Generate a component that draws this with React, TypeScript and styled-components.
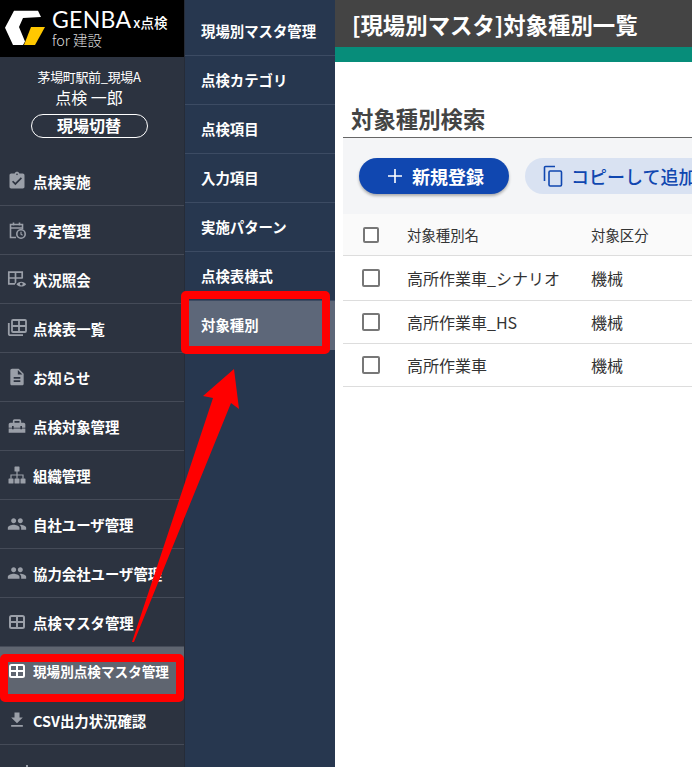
import React from "react";
import styled, { createGlobalStyle } from "styled-components";
import {
  MdAssignmentTurnedIn,
  MdDescription,
  MdFileDownload,
  MdHomeRepairService,
  MdPeople,
} from "react-icons/md";

const FONT = `"Noto Sans CJK JP", "Noto Sans", sans-serif`;

const GlobalStyle = createGlobalStyle`
  html, body {
    margin: 0;
    padding: 0;
    height: 100%;
    overflow: hidden;
    background: #fff;
    font-family: ${FONT};
  }
  * {
    box-sizing: border-box;
  }
`;

function GridIcon() {
  return (
    <svg viewBox="0 0 20 20" fill="none" stroke="currentColor" strokeWidth="2">
      <rect x="3" y="4" width="14" height="12" rx="1.5" />
      <path d="M3 10h14M10 4v12" />
    </svg>
  );
}

function CalendarClockIcon() {
  return (
    <svg viewBox="0 0 20 20" fill="none" stroke="currentColor" strokeWidth="1.6">
      <path d="M9 17.5H3.5v-13h12V9M3.5 8h12M6.5 2.5v3M12.5 2.5v3" />
      <circle cx="14" cy="14" r="4.2" fill="#2c3340" />
      <path d="M14 11.8v2.4l1.6 1" strokeWidth="1.2" />
    </svg>
  );
}

function TableEyeIcon() {
  return (
    <svg viewBox="0 0 20 20" fill="none" stroke="currentColor" strokeWidth="1.7">
      <path d="M8 14.8H1.8V3.2h13.4V9.5M1.8 9h13.4M8.5 3.2v11.6" />
      <path d="M8.2 15.2c2.6-4.4 8.6-4.4 11.2 0-2.6 4.2-8.6 4.2-11.2 0z" fill="#2c3340" stroke="none" />
      <path d="M9.4 15.2c2.2-3.4 7.6-3.4 9.8 0-2.2 3.2-7.6 3.2-9.8 0z" fill="currentColor" stroke="none" />
      <circle cx="14.3" cy="15.1" r="1.4" fill="#2c3340" stroke="none" />
    </svg>
  );
}

function StackedTableIcon() {
  return (
    <svg viewBox="0 0 20 20" fill="none" stroke="currentColor" strokeWidth="1.8">
      <rect x="5" y="2" width="14" height="12" rx="1" />
      <path d="M5 8h14M12 2v12" />
      <path d="M1.8 5v11a1.2 1.2 0 0 0 1.2 1.2h13" />
    </svg>
  );
}

function SitemapIcon() {
  return (
    <svg viewBox="0 0 20 20" fill="currentColor">
      <rect x="7.5" y="1.5" width="5" height="5" rx="0.6" />
      <rect x="1.5" y="13.5" width="5" height="5" rx="0.6" />
      <rect x="7.5" y="13.5" width="5" height="5" rx="0.6" />
      <rect x="13.5" y="13.5" width="5" height="5" rx="0.6" />
      <path d="M9.4 6h1.2v3.4h6v4.4h-1.2v-3.2h-4.8v3.2H9.4v-3.2H4.6v3.2H3.4V9.4h6z" />
    </svg>
  );
}

function CutOffIcon() {
  return (
    <svg viewBox="0 0 20 20" fill="currentColor">
      <rect x="19" y="6" width="2" height="3" />
    </svg>
  );
}

const navItems = [
  { label: "点検実施", icon: <MdAssignmentTurnedIn /> },
  { label: "予定管理", icon: <CalendarClockIcon /> },
  { label: "状況照会", icon: <TableEyeIcon /> },
  { label: "点検表一覧", icon: <StackedTableIcon /> },
  { label: "お知らせ", icon: <MdDescription /> },
  { label: "点検対象管理", icon: <MdHomeRepairService /> },
  { label: "組織管理", icon: <SitemapIcon /> },
  { label: "自社ユーザ管理", icon: <MdPeople /> },
  { label: "協力会社ユーザ管理", icon: <MdPeople /> },
  { label: "点検マスタ管理", icon: <GridIcon /> },
  { label: "現場別点検マスタ管理", icon: <GridIcon />, active: true },
  { label: "CSV出力状況確認", icon: <MdFileDownload /> },
  { label: "", icon: <CutOffIcon /> },
];

const subItems = [
  "現場別マスタ管理",
  "点検カテゴリ",
  "点検項目",
  "入力項目",
  "実施パターン",
  "点検表様式",
  "対象種別",
];

const rows = ["高所作業車_シナリオ", "高所作業車_HS", "高所作業車"];

export default function App() {
  return (
    <Page>
      <GlobalStyle />
      <Sidebar>
        <LogoBar>
          <svg width="50" height="56" viewBox="0 0 50 56">
            <polygon fill="#fff" points="14,10.7 38,10.7 41,17 23,18 19,27 25,41.6 23,45 13,45 5,27.7" />
            <polygon fill="#ffc800" points="31,27 45,27 35,45 24,45" />
          </svg>
          <LogoText>
            <LogoMain>
              GENBA<LogoSuffix>x点検</LogoSuffix>
            </LogoMain>
            <LogoSub>for 建設</LogoSub>
          </LogoText>
        </LogoBar>
        <UserBox>
          <SiteName>茅場町駅前_現場A</SiteName>
          <UserName>点検 一郎</UserName>
          <SwitchButton>現場切替</SwitchButton>
        </UserBox>
        <NavList>
          {navItems.map((item, i) => (
            <NavRow key={i} $active={item.active}>
              <NavIcon $active={item.active}>{item.icon}</NavIcon>
              <span>{item.label}</span>
            </NavRow>
          ))}
        </NavList>
      </Sidebar>

      <SubMenu>
        {subItems.map((label) => (
          <SubRow key={label} $active={label === "対象種別"}>
            {label}
          </SubRow>
        ))}
      </SubMenu>

      <Main>
        <TitleBar>[現場別マスタ]対象種別一覧</TitleBar>
        <AccentBar />
        <Content>
          <SectionTitle>対象種別検索</SectionTitle>
          <Toolbar>
            <PrimaryButton>
              <svg width="14" height="14" viewBox="0 0 14 14" stroke="currentColor" strokeWidth="1.6">
                <path d="M7 0v14M0 7h14" />
              </svg>
              新規登録
            </PrimaryButton>
            <SecondaryButton>
              <svg width="20" height="22" viewBox="0 0 20 22" fill="none" stroke="currentColor" strokeWidth="1.6">
                <path d="M1.5 16V2.5a1 1 0 0 1 1-1H12" />
                <rect x="6" y="6" width="12.5" height="15" rx="1.2" />
              </svg>
              コピーして追加
            </SecondaryButton>
          </Toolbar>
          <Table>
            <HeadRow>
              <CheckCell>
                <Checkbox $size={16} />
              </CheckCell>
              <NameCell>対象種別名</NameCell>
              <div>対象区分</div>
            </HeadRow>
            {rows.map((name, i) => (
              <BodyRow key={name} $tall={i === 0}>
                <CheckCell>
                  <Checkbox $size={18} />
                </CheckCell>
                <NameCell>{name}</NameCell>
                <div>機械</div>
              </BodyRow>
            ))}
          </Table>
        </Content>
      </Main>

      <RedBox $left={0} $top={654} $width={184} $height={48} />
      <RedBox $left={181} $top={291} $width={149} $height={63} />
      <ArrowLayer width="692" height="767" viewBox="0 0 692 767">
        <polygon
          fill="#ff0000"
          points="234,369 203,396 213,398 132,642 134,642 231,403 239,409"
        />
      </ArrowLayer>
    </Page>
  );
}

const Page = styled.div`
  position: relative;
  display: flex;
  width: 692px;
  height: 767px;
  overflow: hidden;
`;

const Sidebar = styled.aside`
  width: 185px;
  flex: none;
  background: #2c3340;
  border-right: 1px solid #262c38;
  color: #fff;
`;

const LogoBar = styled.div`
  display: flex;
  height: 57px;
  background: #000;
`;

const LogoText = styled.div`
  display: flex;
  flex-direction: column;
  padding: 8px 0 0 2px;
  color: #fff;
`;

const LogoMain = styled.div`
  font-family: "Lato", sans-serif;
  font-weight: 400;
  font-size: 23px;
  letter-spacing: 0.3px;
  line-height: 22px;
  white-space: nowrap;
`;

const LogoSuffix = styled.span`
  font-family: ${FONT};
  font-size: 13.5px;
  font-weight: 500;
  letter-spacing: 0;
  margin-left: 2px;
`;

const LogoSub = styled.div`
  font-size: 14.4px;
  line-height: 14px;
  font-weight: 300;
  color: #ddd;
`;

const UserBox = styled.div`
  display: flex;
  flex-direction: column;
  align-items: center;
  height: 100px;
  padding: 10px 6px 0 0;
`;

const SiteName = styled.div`
  font-size: 13px;
  line-height: 19px;
  letter-spacing: -0.35px;
`;

const UserName = styled.div`
  font-size: 16px;
  line-height: 20px;
  margin-top: 1px;
`;

const SwitchButton = styled.div`
  width: 117px;
  height: 24px;
  margin-top: 7px;
  border: 1px solid #fff;
  border-radius: 12px;
  font-size: 16px;
  font-weight: 700;
  line-height: 21px;
  text-align: center;
`;

const NavList = styled.nav`
  display: flex;
  flex-direction: column;
`;

const NavRow = styled.div<{ $active?: boolean }>`
  display: flex;
  align-items: center;
  flex: none;
  height: 49px;
  padding-left: 7px;
  border-bottom: 1px solid #454b58;
  background: ${(p) => (p.$active ? "#5f6570" : "transparent")};
  font-size: ${(p) => (p.$active ? "13.6px" : "14.4px")};
  font-weight: 700;
  white-space: nowrap;
`;

const NavIcon = styled.span<{ $active?: boolean }>`
  display: flex;
  align-items: center;
  justify-content: center;
  width: 20px;
  height: 20px;
  margin-right: 6px;
  color: ${(p) => (p.$active ? "#fff" : "#9a9fa8")};
  svg {
    width: 20px;
    height: 20px;
    overflow: visible;
  }
`;

const SubMenu = styled.div`
  width: 150px;
  flex: none;
  padding-top: 7px;
  background: #27374f;
  color: #fff;
`;

const SubRow = styled.div<{ $active?: boolean }>`
  display: flex;
  align-items: center;
  height: 49px;
  padding: 0 0 2px 16px;
  border-bottom: 1px solid ${(p) => (p.$active ? "transparent" : "#3c4b63")};
  background: ${(p) => (p.$active ? "#5d6779" : "transparent")};
  font-size: 14.4px;
  font-weight: 700;
  white-space: nowrap;
`;

const Main = styled.main`
  flex: 1;
  min-width: 0;
  background: #fff;
`;

const TitleBar = styled.div`
  height: 47px;
  padding-left: 17px;
  background: #444;
  color: #fff;
  font-size: 22.4px;
  font-weight: 700;
  line-height: 48px;
  white-space: nowrap;
`;

const AccentBar = styled.div`
  height: 15px;
  background: #078d7a;
`;

const Content = styled.div`
  padding: 42px 0 0 8px;
`;

const SectionTitle = styled.div`
  height: 34px;
  padding-left: 8px;
  border-bottom: 1px solid #666;
  color: #444;
  font-size: 22.4px;
  font-weight: 700;
  line-height: 28px;
`;

const Toolbar = styled.div`
  display: flex;
  gap: 16px;
  height: 76px;
  padding: 20px 0 0 16px;
  background: #f4f5f7;
  white-space: nowrap;
`;

const PrimaryButton = styled.div`
  display: flex;
  align-items: center;
  gap: 10px;
  flex: none;
  width: 150px;
  height: 36px;
  padding-left: 29px;
  border-radius: 18px;
  background: #1047b0;
  box-shadow: 0 2px 3px rgba(0, 0, 0, 0.3);
  color: #fff;
  font-size: 18px;
  font-weight: 700;
`;

const SecondaryButton = styled.div`
  display: flex;
  align-items: center;
  gap: 8px;
  flex: none;
  height: 36px;
  padding: 0 16px 0 18px;
  border-radius: 18px;
  background: #d9e2f2;
  color: #1047b0;
  font-size: 18px;
  font-weight: 500;
`;

const Table = styled.div`
  color: #333;
`;

const HeadRow = styled.div`
  display: grid;
  grid-template-columns: 64px 184px 1fr;
  align-items: center;
  height: 42px;
  border-bottom: 1px solid #ddd;
  background: #fafafa;
  font-size: 14.4px;
`;

const BodyRow = styled.div<{ $tall?: boolean }>`
  display: grid;
  grid-template-columns: 64px 184px 1fr;
  align-items: center;
  height: ${(p) => (p.$tall ? "45px" : "43px")};
  border-bottom: 1px solid #ddd;
  font-size: 16px;
`;

const CheckCell = styled.div`
  display: flex;
  justify-content: center;
  width: 56px;
`;

const NameCell = styled.div`
  white-space: nowrap;
`;

const Checkbox = styled.span<{ $size: number }>`
  display: block;
  width: ${(p) => p.$size}px;
  height: ${(p) => p.$size}px;
  border: 2px solid #777;
  border-radius: 2px;
  background: #fff;
`;

const RedBox = styled.div<{ $left: number; $top: number; $width: number; $height: number }>`
  position: absolute;
  left: ${(p) => p.$left}px;
  top: ${(p) => p.$top}px;
  width: ${(p) => p.$width}px;
  height: ${(p) => p.$height}px;
  border: 8px solid #ff0000;
  border-radius: 5px;
`;

const ArrowLayer = styled.svg`
  position: absolute;
  left: 0;
  top: 0;
  pointer-events: none;
`;
